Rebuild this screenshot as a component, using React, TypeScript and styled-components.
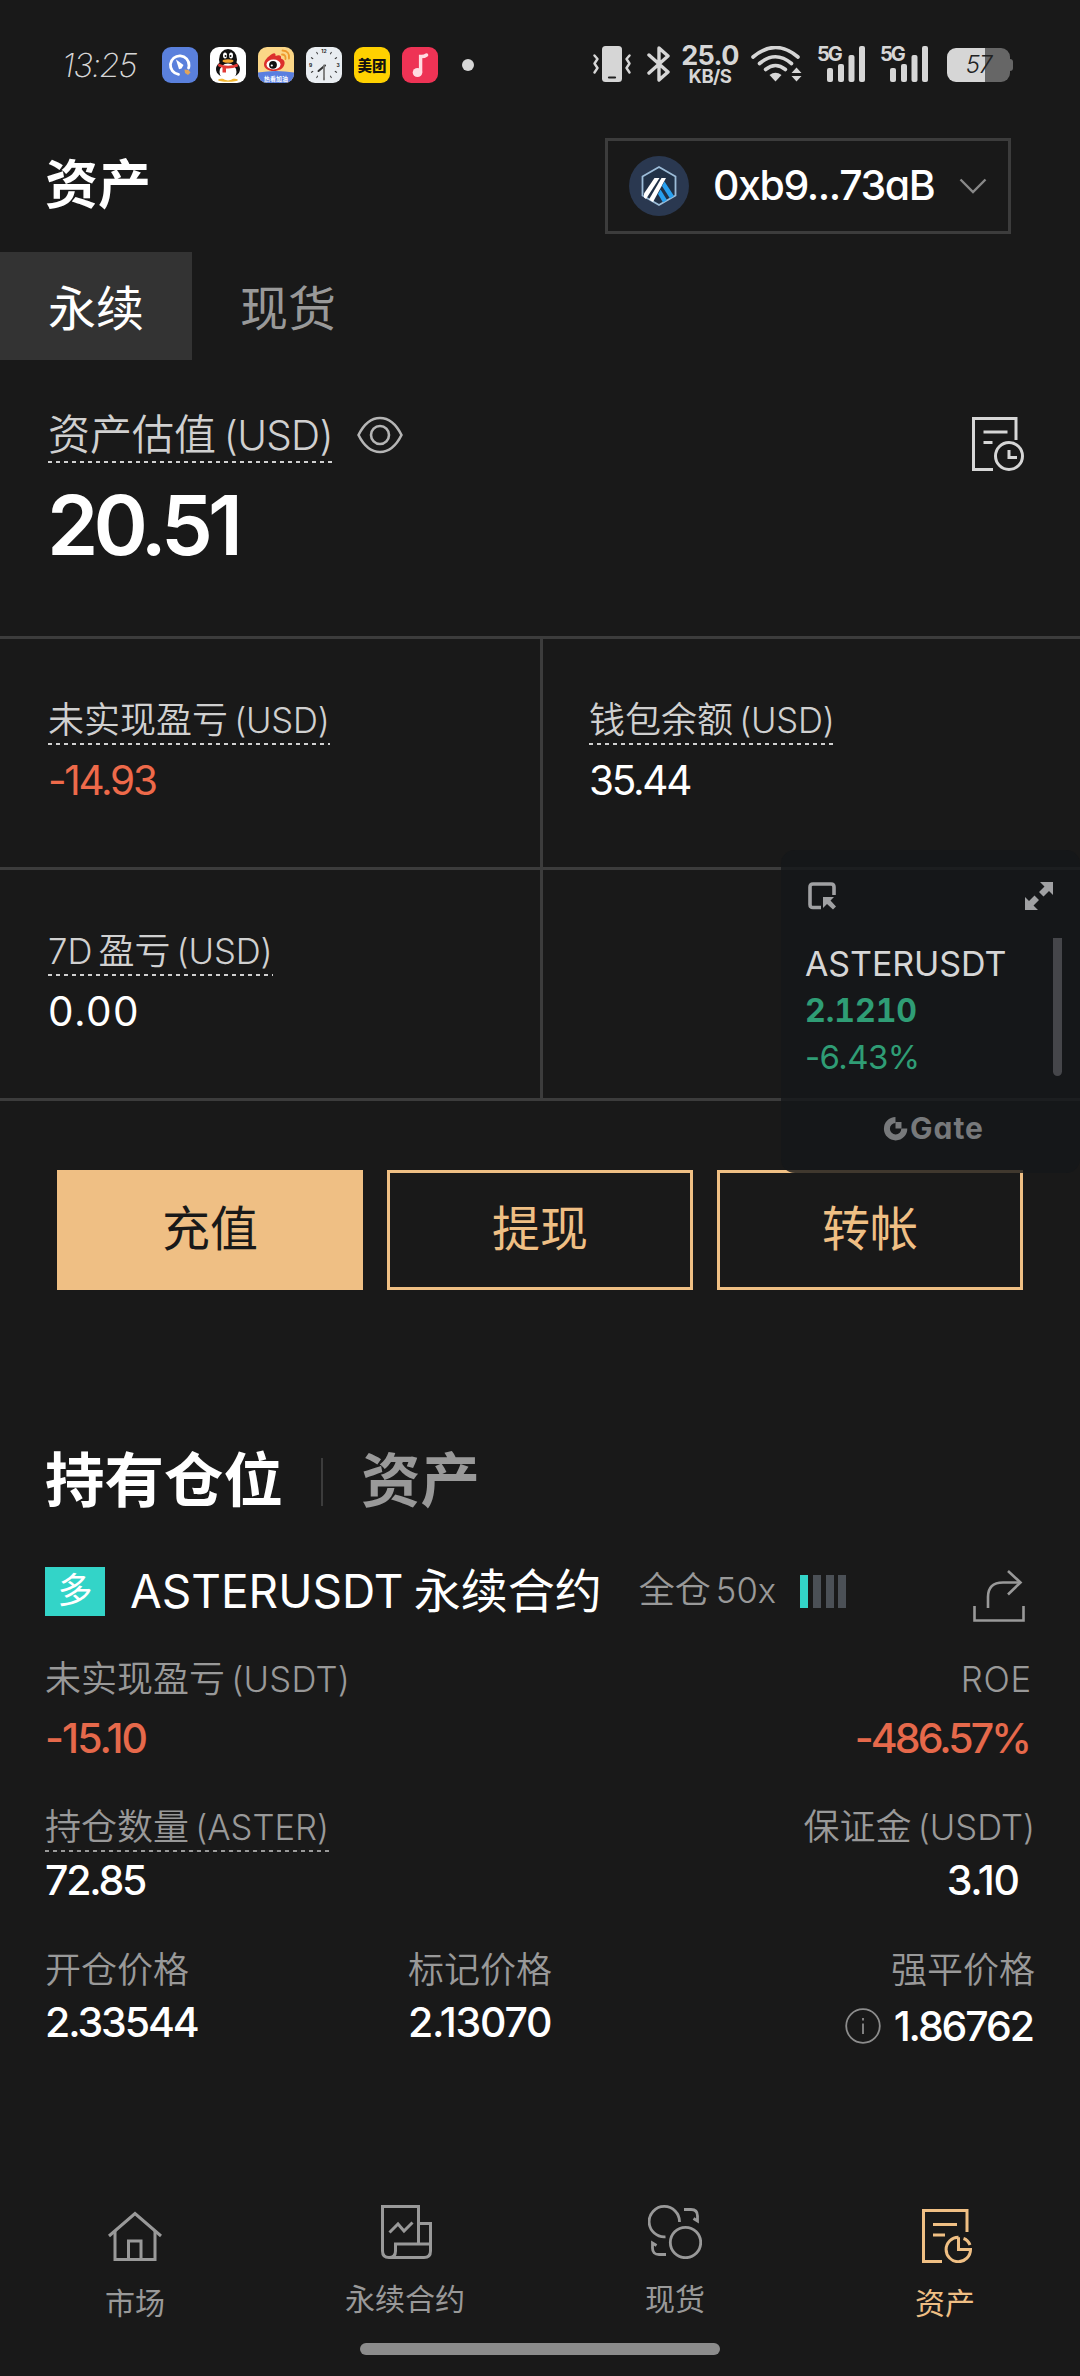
import React from "react";
import styled, { createGlobalStyle } from "styled-components";

const Global = createGlobalStyle`
  * { box-sizing: border-box; }
  body {
    margin: 0;
    background: #191919;
    color: #fff;
    font-family: Inter, "Noto Sans CJK SC", sans-serif;
    font-feature-settings: "cv11", "ss03";
  }
`;

const Screen = styled.main`
  position: relative;
  display: flex;
  flex-direction: column;
  width: 1080px;
  height: 2376px;
  overflow: hidden;
  background: #191919;
`;

/* Latin run: slightly smaller than the Chinese glyphs beside it, with its own tracking */
const Lat = styled.span<{ $ls?: number }>`
  font-size: 0.963em;
  letter-spacing: ${(p) => p.$ls ?? 0}px;
`;

/* ---------- status bar ---------- */
const StatusBar = styled.header`
  display: flex;
  align-items: flex-start;
  height: 120px;
  padding: 46px 67px 0 62px;
  color: #d6d6d6;
`;
const Clock = styled.time`
  width: 100px;
  height: 36px;
  font: italic 200 33px/38px Inter, sans-serif;
  letter-spacing: -1.4px;
  white-space: nowrap;
`;
const AppIcons = styled.div`
  display: flex;
  gap: 12px;
  padding-top: 1px;
  svg { display: block; }
`;
const Dot = styled.i`
  width: 12px;
  height: 12px;
  margin: 13px 0 0 24px;
  border-radius: 50%;
  background: #d6d6d6;
`;
const Indicators = styled.div`
  display: flex;
  align-items: flex-start;
  gap: 0;
  margin-left: auto;
  svg { display: block; }
`;
const BluetoothSlot = styled.div`
  margin-left: 16px;
`;
const Speed = styled.div`
  width: 60px;
  margin: 0 11px 0 9px;
  text-align: center;
  font-weight: 700;
  white-space: nowrap;
`;
const SpeedValue = styled.div`
  font-size: 27px;
  line-height: 20px;
  letter-spacing: -0.6px;
`;
const SpeedUnit = styled.div`
  font-size: 18.5px;
  line-height: 20px;
  letter-spacing: -0.5px;
`;
const Signal = styled.div`
  position: relative;
  width: 48px;
  height: 36px;
  margin-left: 15px;
`;
const SignalTag = styled.span`
  position: absolute;
  left: 0;
  top: -2px;
  font: 700 20px/20px Inter, sans-serif;
  letter-spacing: -2px;
`;
const Battery = styled.div`
  display: flex;
  align-items: center;
  margin: 2px 0 0 19px;
`;
const BatteryBody = styled.div`
  width: 63px;
  height: 34px;
  border-radius: 9px;
  background: linear-gradient(90deg, #d6d6d6 0 60%, #666 60%);
  color: #222;
  font: italic 300 24px/34px Inter, sans-serif;
  text-align: center;
  letter-spacing: -1px;
`;
const BatteryTip = styled.i`
  width: 3px;
  height: 12px;
  border-radius: 0 3px 3px 0;
  background: #666;
`;

/* ---------- page header ---------- */
const Header = styled.div`
  display: flex;
  align-items: center;
  justify-content: space-between;
  height: 132px;
  padding: 0 69px 0 45px;
`;
const Title = styled.h1`
  margin: 0;
  padding-bottom: 2px;
  font-size: 53px;
  line-height: 72px;
  font-weight: 700;
`;
const Wallet = styled.button`
  display: flex;
  align-items: center;
  width: 406px;
  height: 96px;
  padding: 0 21px;
  border: 3px solid #3c3c3c;
  background: none;
  color: #fff;
  font-family: inherit;
  font-feature-settings: inherit;
`;
const Address = styled.span`
  flex: 1;
  padding: 0 0 3px 24px;
  text-align: left;
  font-size: 41px;
  font-weight: 500;
  letter-spacing: -1.4px;
`;

const Tabs = styled.nav`
  display: flex;
  height: 108px;
`;
const Tab = styled.div<{ $on?: boolean }>`
  width: 192px;
  padding-top: 3px;
  line-height: 108px;
  height: 108px;
  text-align: center;
  font-size: 48px;
  color: ${(p) => (p.$on ? "#fff" : "#999")};
  background: ${(p) => (p.$on ? "#333" : "none")};
`;

/* ---------- summary ---------- */
const Summary = styled.section`
  display: flex;
  justify-content: space-between;
  height: 276px;
  padding: 45px 54px 0 48px;
`;
const SummaryIcon = styled.div`
  padding-top: 12px;
`;
const LabelRow = styled.div`
  display: flex;
  align-items: center;
  gap: 24px;
`;
const EyeSlot = styled.div`
  padding-top: 5px;
`;
const Label = styled.div<{ $size?: number; $color?: string; $dash?: boolean }>`
  width: max-content;
  height: ${(p) => (p.$size === 42 ? 58 : 50)}px;
  line-height: ${(p) => (p.$size === 42 ? 60 : 50)}px;
  font-size: ${(p) => p.$size ?? 36}px;
  font-weight: 350;
  white-space: nowrap;
  word-spacing: -4px;
  color: ${(p) => p.$color ?? "#d0d0d0"};
  ${(p) =>
    p.$dash &&
    `background: repeating-linear-gradient(90deg, ${p.$color ?? "#d0d0d0"} 0 4px, transparent 4px 8px) left bottom / 100% 2px no-repeat;`}
`;
const Total = styled.div`
  margin-top: 20px;
  margin-left: -1px;
  height: 84px;
  line-height: 84px;
  font-size: 82.5px;
  font-weight: 600;
  letter-spacing: -5px;
`;

const StatGrid = styled.section`
  display: grid;
  grid-template-columns: 540px 540px;
  grid-auto-rows: 231px;
  border-bottom: 3px solid #3c3c3c;
`;
const Stat = styled.div`
  padding: 56px 0 0 48px;
  border-top: 3px solid #3c3c3c;
  &:nth-child(even) {
    padding-left: 46px;
    border-left: 3px solid #3c3c3c;
  }
`;
const StatValue = styled.div<{ $color?: string; $ls?: number }>`
  margin-top: 11px;
  line-height: 50px;
  font-size: 40.5px;
  color: ${(p) => p.$color ?? "#fff"};
  letter-spacing: ${(p) => p.$ls ?? 0}px;
`;

/* ---------- actions ---------- */
const Actions = styled.section`
  display: flex;
  gap: 24px;
  padding: 69px 57px 0;
`;
const Action = styled.button<{ $solid?: boolean }>`
  display: flex;
  align-items: flex-start;
  justify-content: center;
  flex: 1;
  height: 120px;
  padding: 0;
  border: 3px solid #efbf84;
  background: ${(p) => (p.$solid ? "#efbf84" : "transparent")};
  color: ${(p) => (p.$solid ? "#191919" : "#efbf84")};
  font-family: inherit;
  font-size: 48px;
  line-height: 111px;
`;

/* ---------- position ---------- */
const SectionTabs = styled.div`
  display: flex;
  align-items: center;
  height: 80px;
  margin-top: 152px;
  padding-left: 45px;
  font-size: 59.5px;
  font-weight: 700;
`;
const SectionTab = styled.span<{ $on?: boolean }>`
  padding-bottom: 3px;
  line-height: 77px;
  color: ${(p) => (p.$on ? "#fff" : "#999")};
`;
const Divider = styled.i`
  width: 2px;
  height: 48px;
  margin: 0 38px;
  background: #3c3c3c;
`;
const PairRow = styled.div`
  display: flex;
  align-items: center;
  height: 56px;
  margin-top: 41px;
  padding: 0 55px 0 45px;
`;
const Side = styled.span`
  width: 60px;
  height: 49px;
  line-height: 47px;
  text-align: center;
  font-size: 35px;
  background: #33d4c8;
`;
const Pair = styled.span`
  margin-left: 25px;
  font-size: 47px;
  line-height: 56px;
  white-space: pre;
  word-spacing: -3px;
`;
const PairCode = styled.span`
  font-size: 46px;
`;
const Leverage = styled.span`
  margin-left: 37px;
  padding-bottom: 2px;
  font-size: 36px;
  line-height: 54px;
  font-weight: 350;
  color: #999;
  white-space: nowrap;
  word-spacing: -5px;
`;
const Risk = styled.div`
  display: flex;
  gap: 4.7px;
  margin-left: 24px;
`;
const RiskBar = styled.i<{ $on?: boolean }>`
  width: 8px;
  height: 33px;
  background: ${(p) => (p.$on ? "#33d4c8" : "#4b5056")};
`;
const ShareSlot = styled.div`
  margin: 9px 0 0 auto;
  height: 52px;
`;
const Row = styled.div<{ $top: number; $h: number }>`
  display: grid;
  grid-template-columns: 363px 1fr auto;
  height: ${(p) => p.$h}px;
  margin-top: ${(p) => p.$top}px;
  padding: 0 45px;
`;
const Cell = styled.div<{ $right?: boolean; $inset?: number }>`
  display: flex;
  flex-direction: column;
  align-items: ${(p) => (p.$right ? "flex-end" : "flex-start")};
  padding-right: ${(p) => p.$inset ?? 0}px;
`;
/* The right margin also absorbs the tracking that trails the last digit. */
const Value = styled.div<{ $gap: number; $color?: string; $ls?: number; $inset?: number }>`
  display: flex;
  align-items: center;
  gap: 13px;
  height: 50px;
  margin: ${(p) => p.$gap}px ${(p) => (p.$inset ?? 0) - (p.$ls ?? 0)}px 0 0;
  line-height: 50px;
  font-size: 41px;
  font-weight: 500;
  color: ${(p) => p.$color ?? "#fff"};
  letter-spacing: ${(p) => p.$ls ?? 0}px;
`;

/* ---------- bottom navigation ---------- */
const BottomNav = styled.nav`
  display: grid;
  grid-template-columns: repeat(4, 270px);
  height: 138px;
  margin-top: auto;
`;
const NavItem = styled.div<{ $on?: boolean; $low?: boolean }>`
  display: flex;
  flex-direction: column;
  align-items: center;
  padding-top: ${(p) => (p.$low ? 4 : 0)}px;
  font-size: 30px;
  line-height: 40px;
  color: ${(p) => (p.$on ? "#efbf84" : "#999")};
  svg { display: block; margin-bottom: 20px; }
`;
const HomeBar = styled.div`
  flex: none;
  width: 360px;
  height: 12px;
  margin: 0 auto 21px;
  border-radius: 6px;
  background: #8c8c8c;
`;

/* ---------- floating ticker ---------- */
const Ticker = styled.aside`
  position: absolute;
  left: 781px;
  top: 850px;
  width: 299px;
  height: 323px;
  padding: 32px 18px 0 24px;
  border-radius: 14px;
  background: rgba(20, 23, 25, 0.8);
`;
const TickerTools = styled.div`
  display: flex;
  justify-content: space-between;
  padding: 0 8px 0 3px;
  svg { display: block; }
`;
const TickerBody = styled.div`
  display: flex;
  justify-content: space-between;
  height: 138px;
  margin-top: 27px;
`;
const Quote = styled.div`
  padding-top: 2px;
  font-size: 34px;
  line-height: 48px;
  color: #d6d6d6;
  white-space: nowrap;
`;
const QuoteName = styled.div`
  letter-spacing: -0.1px;
`;
const QuotePrice = styled.div`
  color: #2f9d75;
  font-weight: 700;
  font-size: 32px;
  line-height: 45px;
  font-feature-settings: "tnum";
`;
const QuoteChange = styled.div`
  color: #2f9d75;
  font-size: 33px;
  line-height: 49px;
  letter-spacing: -0.6px;
`;
const Scrollbar = styled.i`
  width: 9px;
  height: 138px;
  border-radius: 0 0 5px 5px;
  background: #45464a;
`;
const Brand = styled.div`
  display: flex;
  align-items: center;
  justify-content: center;
  gap: 2px;
  margin-top: 32px;
  line-height: 40px;
  font-size: 30px;
  font-weight: 700;
  letter-spacing: 1px;
  color: #77797b;
`;

const RED = "#ee6a4a";
const RED_SOFT = "#e6694b";
const GREY = "#999";

const Squircle = ({ fill, children }: { fill: string; children?: React.ReactNode }) => (
  <svg width="36" height="36" viewBox="0 0 36 36">
    <rect width="36" height="36" rx="9" fill={fill} />
    {children}
  </svg>
);

const Bars = () => (
  <svg width="48" height="36" viewBox="0 0 48 36" fill="#d6d6d6">
    <rect x="10" y="22" width="6" height="14" rx="2" />
    <rect x="21" y="18" width="6" height="18" rx="2" />
    <rect x="31.500" y="9" width="6" height="27" rx="2" />
    <rect x="42" y="0" width="6" height="36" rx="2" />
  </svg>
);

const AppTray = () => (
  <AppIcons>
    <Squircle fill="#5a80dc">
      <path d="M16.500 27.300A9.300 9.300 0 1 1 27 18.500q0 1.500-.5 2.500" fill="none" stroke="#fff" strokeWidth="2.800" strokeLinecap="round" />
      <path d="M14 12.500l7.500 5.500-2 3.500-2.500.8z" fill="#fff" />
      <path d="M22.500 22.500l4 .5 2 2.500-2.500 2.500-3-2z" fill="#e0a45c" />
    </Squircle>
    <Squircle fill="#fff">
      <ellipse cx="18" cy="33" rx="10" ry="1.800" fill="#f2b62f" />
      <ellipse cx="18" cy="22" rx="12" ry="9" fill="#111" />
      <ellipse cx="18" cy="12.500" rx="9" ry="10.500" fill="#111" />
      <ellipse cx="18" cy="25" rx="8.500" ry="8.500" fill="#fff" />
      <path d="M8.500 16.500q9.500 4.500 19 0l.5 3q-6 2.500-12 2v4h-3.500v-5q-3-.5-4.500-1.500z" fill="#e23a36" />
      <ellipse cx="15" cy="8.500" rx="2" ry="3" fill="#fff" />
      <ellipse cx="21" cy="8.500" rx="2" ry="3" fill="#fff" />
      <circle cx="15.500" cy="9" r="1" fill="#111" />
      <circle cx="20.500" cy="9" r="1" fill="#111" />
      <ellipse cx="18" cy="14" rx="5.500" ry="1.800" fill="#f2a52f" />
    </Squircle>
    <Squircle fill="#fbd687">
      <path d="M0 25.500q18-3 36 0V27a9 9 0 0 1-9 9H9a9 9 0 0 1-9-9z" fill="#5a7fe0" />
      <path d="M14 7c3-2 4 0 3.500 2 4-1.500 6-.5 5.500 2.500 3 1 4 3 3.500 5.500-1 5-6 7-11 7S6 21.500 6 17.500 10 9.500 14 7z" fill="#dc2f2c" />
      <ellipse cx="15.500" cy="17.500" rx="7" ry="5" fill="#fff" />
      <circle cx="15" cy="17.800" r="3.900" fill="#111" />
      <circle cx="13.800" cy="18.500" r="1.100" fill="#fff" />
      <path d="M24 7.500q4 0 3.500 4.500M24.500 3.500q7.500.5 6.500 8" fill="none" stroke="#ee9a2c" strokeWidth="1.800" strokeLinecap="round" />
      <text x="18" y="33.500" textAnchor="middle" fontSize="6" fontWeight="700" fill="#fff">热看加油</text>
    </Squircle>
    <Squircle fill="#e9edf1">
      {Array.from({ length: 12 }, (_, i) => (
        <path key={i} d="M18 3v2.500" stroke="#333" strokeWidth=".9" transform={`rotate(${i * 30} 18 18)`} />
      ))}
      <rect x="15" y="2" width="6" height="4" fill="#e9edf1" />
      <rect x="2" y="15" width="4" height="6" fill="#e9edf1" />
      <rect x="30" y="15" width="4" height="6" fill="#e9edf1" />
      <text x="18" y="6.300" textAnchor="middle" fontSize="5" fontWeight="700" fill="#222">12</text>
      <text x="4.500" y="20" textAnchor="middle" fontSize="5" fontWeight="700" fill="#222">9</text>
      <text x="32" y="20" textAnchor="middle" fontSize="5" fontWeight="700" fill="#222">3</text>
      <path d="M19 18.500L12.500 24" stroke="#333" strokeWidth="2" strokeLinecap="round" />
      <path d="M18 18.500v14" stroke="#777" strokeWidth="1.800" strokeLinecap="round" />
    </Squircle>
    <Squircle fill="#ffd100">
      <text x="18" y="23.500" textAnchor="middle" fontSize="14.500" fontWeight="900" fill="#111">美团</text>
    </Squircle>
    <Squircle fill="#ee3355">
      <ellipse cx="15.500" cy="25.500" rx="4.800" ry="4.500" fill="#ffdce2" />
      <path d="M18.600 25V9.500q3.500.3 6-1.500" fill="none" stroke="#ffdce2" strokeWidth="3.400" strokeLinecap="round" />
    </Squircle>
  </AppIcons>
);

const SystemTray = () => (
  <Indicators>
    <svg width="38" height="36" viewBox="0 0 38 36">
      <rect x="9" y="0" width="20" height="36" rx="3.500" fill="#d6d6d6" />
      <path d="M16 31.500h6" stroke="#222" strokeWidth="2.200" strokeLinecap="round" />
      <path d="M1.500 9.500l3 3.500-3 4.500 3 4.500-3 4.500M36.500 9.500l-3 3.500 3 4.500-3 4.500 3 4.500" fill="none" stroke="#d6d6d6" strokeWidth="2.400" strokeLinecap="round" strokeLinejoin="round" />
    </svg>
    <BluetoothSlot>
      <svg width="24" height="36" viewBox="0 0 24 36">
        <path d="M2 9l19 17-9 8V2l9 8L2 27" fill="none" stroke="#d6d6d6" strokeWidth="3.400" strokeLinejoin="round" strokeLinecap="round" />
      </svg>
    </BluetoothSlot>
    <Speed>
      <SpeedValue>25.0</SpeedValue>
      <SpeedUnit>KB/S</SpeedUnit>
    </Speed>
    <svg width="51" height="36" viewBox="0 0 51 36">
      <g fill="none" stroke="#d6d6d6" strokeWidth="3.600" strokeLinecap="round">
        <path d="M2 11q22.500-19 45 0" />
        <path d="M8.500 17.500q16-13.500 32 0" />
        <path d="M14.500 23.500q10-8 20 0" />
      </g>
      <path d="M18.500 29q6-4.500 12 0l-6 6.500z" fill="#d6d6d6" />
      <path d="M40.500 27l5-5.500 5 5.500zM40.500 30l5 5.500 5-5.500z" fill="#d6d6d6" />
    </svg>
    <Signal><Bars /><SignalTag>5G</SignalTag></Signal>
    <Signal><Bars /><SignalTag>5G</SignalTag></Signal>
    <Battery><BatteryBody>57</BatteryBody><BatteryTip /></Battery>
  </Indicators>
);

const ChainIcon = () => (
  <svg width="60" height="60" viewBox="0 0 60 60">
    <circle cx="30" cy="30" r="30" fill="#2a3850" />
    <path d="M30 11l16.500 9.500v19L30 49l-16.500-9.500v-19z" fill="#213147" stroke="#9cbcd8" strokeWidth="1.800" />
    <path d="M15 37.500l10.500-15.500h5L17 43l-2-1.500z" fill="#fff" />
    <path d="M20 43.500L32.500 22h4.500L24 46z" fill="#fff" />
    <path d="M35.500 25.500L45 40l-4 2.500-8-12.500z" fill="#28a0f0" />
    <path d="M31.500 33.500L38 44l-4 2.500-5-8.500z" fill="#28a0f0" />
  </svg>
);

const Chevron = () => (
  <svg width="28" height="16" viewBox="0 0 28 16">
    <path d="M1.500 1.500L14 14 26.500 1.500" fill="none" stroke="#888" strokeWidth="2.400" />
  </svg>
);

const Eye = () => (
  <svg width="46" height="38" viewBox="0 0 46 38" fill="none" stroke="#b5b5b5" strokeWidth="2.600">
    <path d="M1.500 19Q10 2 23 2t21.500 17Q36 36 23 36T1.500 19z" strokeLinejoin="round" />
    <circle cx="23" cy="19" r="9" />
  </svg>
);

const HistoryIcon = () => (
  <svg width="54" height="54" viewBox="0 0 54 54" fill="none" stroke="#d6d6d6" strokeWidth="3">
    <path d="M21 52.500H1.500v-51h42.500V23" />
    <path d="M11.500 15h24M11.500 25.500h9" />
    <circle cx="37" cy="39" r="13.500" />
    <path d="M37 33v7.500h8" />
  </svg>
);

const ShareIcon = () => (
  <svg width="52" height="52" viewBox="0 0 52 52" fill="none" stroke="#999" strokeWidth="2.600">
    <path d="M1.500 36v14.500h49V36" />
    <path d="M15 38V27Q15 12.500 30 12.500h17" />
    <path d="M35 1l12.500 11.500L35 24.500" />
  </svg>
);

const InfoIcon = () => (
  <svg width="36" height="36" viewBox="0 0 36 36" fill="none" stroke="#8c8c8c" strokeWidth="1.800">
    <circle cx="18" cy="18" r="16.800" />
    <path d="M18 10v2.500M18 15.500V26" />
  </svg>
);

const HomeIcon = () => (
  <svg width="54" height="54" viewBox="0 0 54 54" fill="none" stroke="currentColor" strokeWidth="3">
    <path d="M1 27L27 4.500 53 27" />
    <path d="M7 22v28.500h40V22" />
    <path d="M20.500 50V32H33v18" />
  </svg>
);
const FuturesIcon = () => (
  <svg width="54" height="54" viewBox="0 0 54 54" fill="none" stroke="currentColor" strokeWidth="3">
    <path d="M40.500 39V1.500h-36V46q0 6.500 6.500 6.500t6.500-6.500v-7h35" />
    <path d="M40.500 18.500h12V46q0 6.500-6.500 6.500H11" />
    <path d="M11.500 27.500l8.500-8.500 6 7 8.500-8.500" />
  </svg>
);
const SpotIcon = () => (
  <svg width="54" height="54" viewBox="0 0 54 54" fill="none" stroke="currentColor" strokeWidth="2.800">
    <path d="M17.500 31.800A15.200 15.200 0 1 1 31.500 17" />
    <circle cx="37.500" cy="37.500" r="15.200" />
    <path d="M36 4.500h7q6.500 0 6.500 6.500v5l-4-2.500" />
    <path d="M18 49.500h-7q-6.500 0-6.500-6.500v-5l4 2.500" />
  </svg>
);
const AssetsIcon = () => (
  <svg width="54" height="54" viewBox="-2 0 54 54" fill="none" stroke="currentColor" strokeWidth="3">
    <path d="M22 52.500H3.500v-51H47V23" />
    <path d="M13 15.500h24M13 26h12" />
    <path d="M38.500 28.300A12.200 12.200 0 1 0 50.500 40.500h-12V28.300" />
    <path d="M43.500 29.500q4.500 1.500 6.500 6.500" />
  </svg>
);

const FloatingTicker = () => (
  <Ticker>
    <TickerTools>
      <svg width="29" height="29" viewBox="0 0 29 29">
        <path d="M13 25.500H5q-3 0-3-3V5q0-3 3-3h18q3 0 3 3v8" fill="none" stroke="#a0a1a3" strokeWidth="3.600" />
        <path d="M15 15h11l-3.500 3.500 5.500 6-3 3-6-5.500-4 4z" fill="#a0a1a3" />
      </svg>
      <svg width="29" height="29" viewBox="0 0 29 29" fill="#a0a1a3">
        <path d="M15 0h13v13l-4-4-5.500 5.500-4.500-4.500L19.500 4.500z" />
        <path d="M0 15l4 4 5.500-5.500 4.500 4.500-5.500 5.500L13 28H0z" />
      </svg>
    </TickerTools>
    <TickerBody>
      <Quote>
        <QuoteName>ASTERUSDT</QuoteName>
        <QuotePrice>2.1210</QuotePrice>
        <QuoteChange>-6.43%</QuoteChange>
      </Quote>
      <Scrollbar />
    </TickerBody>
    <Brand>
      <svg width="25" height="25" viewBox="0 0 25 25">
        <path d="M12.500 4A8.700 8.700 0 1 0 21.300 12.500" fill="none" stroke="currentColor" strokeWidth="6" />
        <path d="M12.500 6h6v6.500h-6z" fill="currentColor" />
      </svg>
      Gate
    </Brand>
  </Ticker>
);

export default function App() {
  return (
    <Screen>
      <Global />
      <StatusBar>
        <Clock>13:25</Clock>
        <AppTray />
        <Dot />
        <SystemTray />
      </StatusBar>

      <Header>
        <Title>资产</Title>
        <Wallet>
          <ChainIcon />
          <Address>0xb9...73aB</Address>
          <Chevron />
        </Wallet>
      </Header>

      <Tabs>
        <Tab $on>永续</Tab>
        <Tab>现货</Tab>
      </Tabs>

      <Summary>
        <div>
          <LabelRow>
            <Label $size={42} $dash>资产估值 <Lat $ls={-0.7}>(USD)</Lat></Label>
            <EyeSlot><Eye /></EyeSlot>
          </LabelRow>
          <Total>20.51</Total>
        </div>
        <SummaryIcon><HistoryIcon /></SummaryIcon>
      </Summary>

      <StatGrid>
        <Stat>
          <Label $dash>未实现盈亏 <Lat $ls={-0.2}>(USD)</Lat></Label>
          <StatValue $color={RED} $ls={-2.3}>-14.93</StatValue>
        </Stat>
        <Stat>
          <Label $dash>钱包余额 <Lat $ls={-0.2}>(USD)</Lat></Label>
          <StatValue $ls={-2.3}>35.44</StatValue>
        </Stat>
        <Stat>
          <Label $dash><Lat>7D</Lat> 盈亏 <Lat $ls={-0.1}>(USD)</Lat></Label>
          <StatValue $ls={1.4}>0.00</StatValue>
        </Stat>
        <Stat />
      </StatGrid>

      <Actions>
        <Action $solid>充值</Action>
        <Action>提现</Action>
        <Action>转帐</Action>
      </Actions>

      <SectionTabs>
        <SectionTab $on>持有仓位</SectionTab>
        <Divider />
        <SectionTab>资产</SectionTab>
      </SectionTabs>

      <PairRow>
        <Side>多</Side>
        <Pair><PairCode>ASTERUSDT</PairCode> 永续合约</Pair>
        <Leverage>全仓 <Lat>50x</Lat></Leverage>
        <Risk><RiskBar $on /><RiskBar /><RiskBar /><RiskBar /></Risk>
        <ShareSlot><ShareIcon /></ShareSlot>
      </PairRow>

      <Row $top={35} $h={109}>
        <Cell>
          <Label $color={GREY}>未实现盈亏 <Lat $ls={0.3}>(USDT)</Lat></Label>
          <Value $gap={9} $color={RED_SOFT} $ls={-1.9}>-15.10</Value>
        </Cell>
        <span />
        <Cell $right $inset={3}>
          <Label $color={GREY}><Lat $ls={0.8}>ROE</Lat></Label>
          <Value $gap={9} $color={RED_SOFT} $ls={-2.9}>-486.57%</Value>
        </Cell>
      </Row>
      <Row $top={39} $h={103}>
        <Cell>
          <Label $color={GREY} $dash>持仓数量 <Lat>(ASTER)</Lat></Label>
          <Value $gap={3} $ls={-2.2}>72.85</Value>
        </Cell>
        <span />
        <Cell $right>
          <Label $color={GREY}>保证金 <Lat>(USDT)</Lat></Label>
          <Value $gap={3} $inset={15} $ls={-1.3}>3.10</Value>
        </Cell>
      </Row>
      <Row $top={40} $h={106}>
        <Cell>
          <Label $color={GREY}>开仓价格</Label>
          <Value $gap={2} $ls={-2.1}>2.33544</Value>
        </Cell>
        <Cell>
          <Label $color={GREY}>标记价格</Label>
          <Value $gap={2} $ls={-1.2}>2.13070</Value>
        </Cell>
        <Cell $right>
          <Label $color={GREY}>强平价格</Label>
          <Value $gap={6} $ls={-2.1}><InfoIcon />1.86762</Value>
        </Cell>
      </Row>

      <BottomNav>
        <NavItem $low><HomeIcon />市场</NavItem>
        <NavItem><FuturesIcon />永续合约</NavItem>
        <NavItem><SpotIcon />现货</NavItem>
        <NavItem $on $low><AssetsIcon />资产</NavItem>
      </BottomNav>
      <HomeBar />
      <FloatingTicker />
    </Screen>
  );
}
